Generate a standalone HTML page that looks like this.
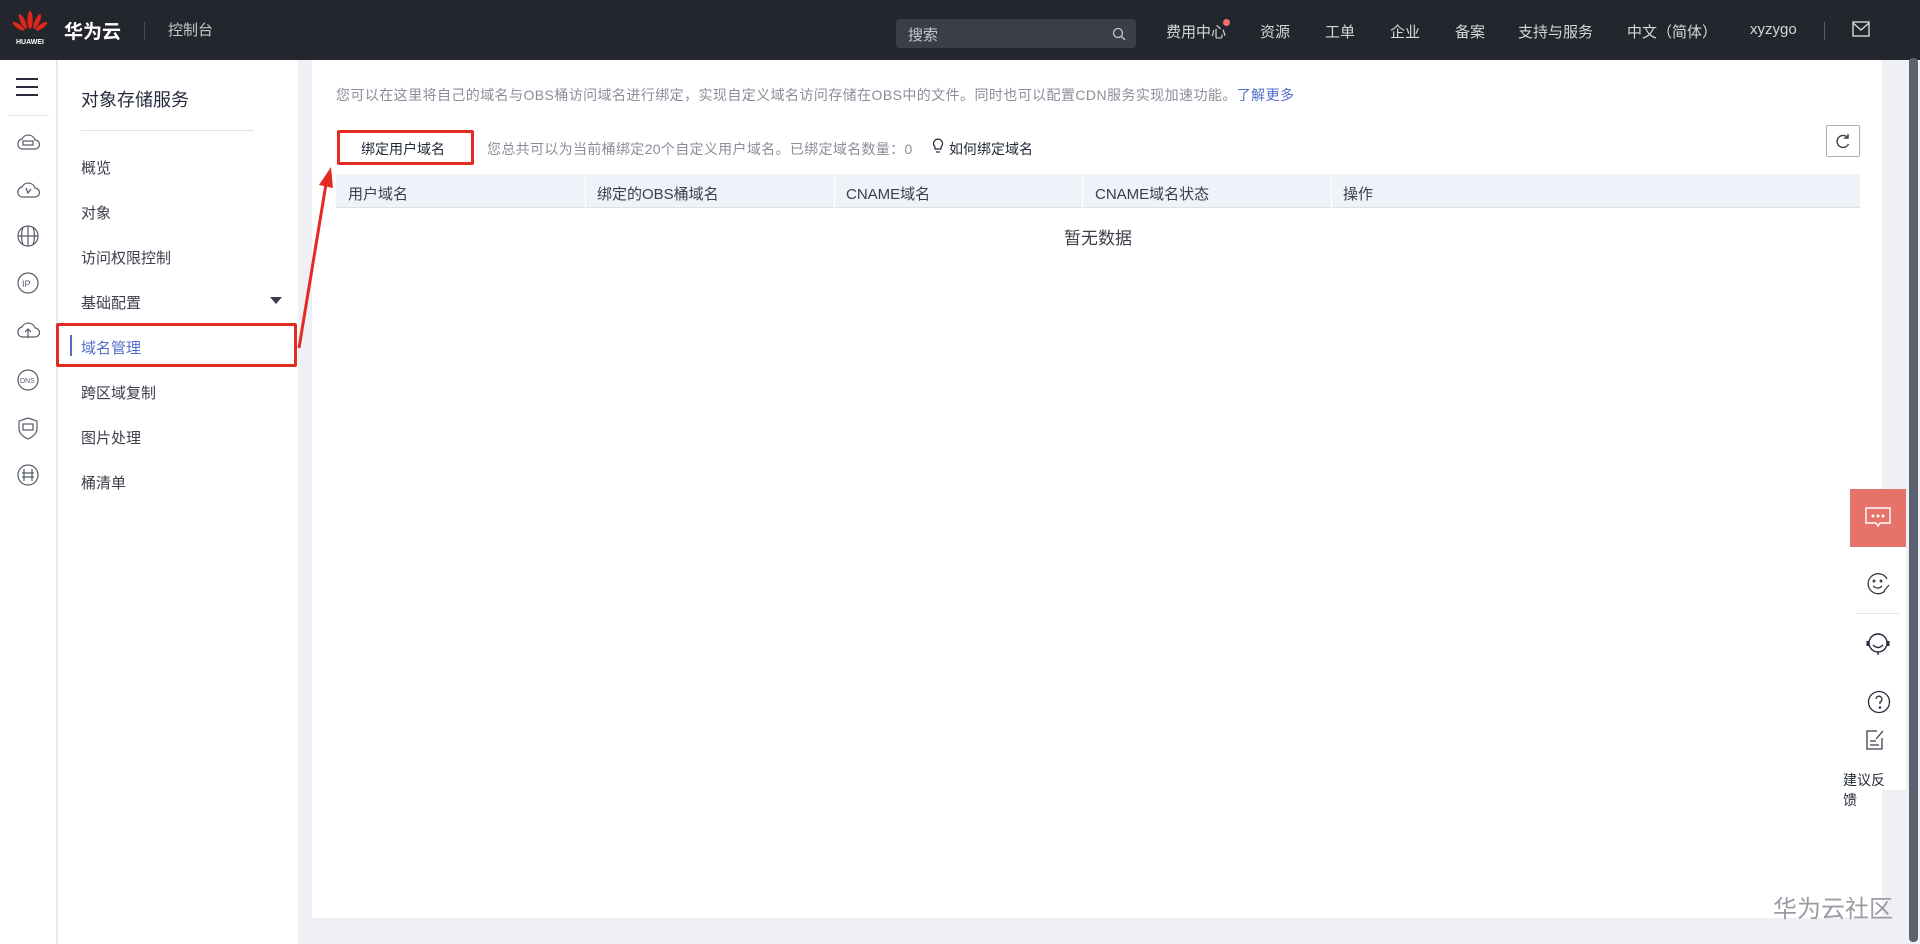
<!DOCTYPE html>
<html><head><meta charset="utf-8">
<style>
*{margin:0;padding:0;box-sizing:border-box}
body{width:1920px;height:944px;overflow:hidden;background:#eef0f5;font-family:"Liberation Sans","Noto Sans CJK SC",sans-serif;position:relative;color:#252b3a}
.abs{position:absolute}
.hdr{left:0;top:0;width:1920px;height:60px;background:#24262d}
.nav{color:#d5d7dc;font-size:15px;top:21px;white-space:nowrap}
.rail{left:0;top:60px;width:57px;height:884px;background:#fff;border-right:1px solid #e5e6ea}
.side{left:58px;top:60px;width:240px;height:884px;background:#fff}
.mi{left:81px;font-size:15px;color:#3b3f4a}
.card{left:312px;top:60px;width:1570px;height:858px;background:#fff}
.th{font-size:15px;color:#3b3f4a;top:183px}
</style></head><body>
<div class="abs hdr"></div>
<svg class="abs" style="left:12px;top:10px" width="36" height="36" viewBox="0 0 36 36">
<g fill="#e0261c"><ellipse cx="18" cy="10" rx="2.6" ry="9"/><ellipse cx="13" cy="11" rx="2.4" ry="8" transform="rotate(-25 13 16)"/><ellipse cx="23" cy="11" rx="2.4" ry="8" transform="rotate(25 23 16)"/><ellipse cx="9" cy="15" rx="2.2" ry="7" transform="rotate(-55 9 18)"/><ellipse cx="27" cy="15" rx="2.2" ry="7" transform="rotate(55 27 18)"/></g>
<text x="18" y="34" font-size="7" fill="#fff" text-anchor="middle" font-family="Liberation Sans" font-weight="bold">HUAWEI</text></svg>
<div class="abs" style="left:64px;top:17px;color:#fff;font-size:19px;font-weight:bold">华为云</div>
<div class="abs" style="left:144px;top:22px;width:1px;height:18px;background:#4a4d57"></div>
<div class="abs" style="left:168px;top:19px;color:#c6c8ce;font-size:15px">控制台</div>
<div class="abs" style="left:896px;top:19px;width:240px;height:29px;background:#3b3e48;border-radius:3px"></div>
<div class="abs" style="left:908px;top:24px;color:#c6c8ce;font-size:15px">搜索</div>
<svg class="abs" style="left:1112px;top:27px" width="14" height="14" viewBox="0 0 14 14"><circle cx="6" cy="6" r="4.5" fill="none" stroke="#c6c8ce" stroke-width="1.3"/><path d="M9.5 9.5L13 13" stroke="#c6c8ce" stroke-width="1.3"/></svg>
<div class="abs nav" style="left:1166px">费用中心</div>
<div class="abs" style="left:1223px;top:19px;width:7px;height:7px;border-radius:50%;background:#f66f6a"></div>
<div class="abs nav" style="left:1260px">资源</div>
<div class="abs nav" style="left:1325px">工单</div>
<div class="abs nav" style="left:1390px">企业</div>
<div class="abs nav" style="left:1455px">备案</div>
<div class="abs nav" style="left:1518px">支持与服务</div>
<div class="abs nav" style="left:1627px">中文（简体）</div>
<div class="abs nav" style="left:1750px">xyzygo</div>
<div class="abs" style="left:1824px;top:22px;width:1px;height:18px;background:#5a5d66"></div>
<svg class="abs" style="left:1852px;top:21px" width="18" height="16" viewBox="0 0 18 16"><rect x="1" y="1" width="16" height="14" fill="none" stroke="#d5d7dc" stroke-width="1.4"/><path d="M1 2l8 7 8-7" fill="none" stroke="#d5d7dc" stroke-width="1.4"/></svg>

<div class="abs rail"></div>
<svg class="abs" style="left:16px;top:78px" width="22" height="18"><rect y="0" width="22" height="2" fill="#252b3a"/><rect y="8" width="22" height="2" fill="#252b3a"/><rect y="16" width="22" height="2" fill="#252b3a"/></svg>
<div class="abs" style="left:8px;top:115px;width:41px;height:1px;background:#e1e3e8"></div>
<svg class="abs" style="left:14px;top:128px" width="28" height="360" viewBox="0 0 28 360" fill="none" stroke="#555a66" stroke-width="1.2">
<path d="M4 17a5 5 0 0 1 4-6a7 7 0 0 1 13 1a4.5 4.5 0 0 1 0 9H8a4.5 4.5 0 0 1-4-4z"/><rect x="9" y="13" width="10" height="4"/>
<path d="M4 65a5 5 0 0 1 4-6a7 7 0 0 1 13 1a4.5 4.5 0 0 1 0 9H8a4.5 4.5 0 0 1-4-4z"/><path d="M12 60l2 5 3-4"/>
<circle cx="14" cy="108" r="10"/><path d="M4 108h20M14 98v20M9 99q-3 9 0 18M19 99q3 9 0 18"/>
<circle cx="14" cy="155" r="10"/><text x="8" y="159" font-size="9" fill="#555a66" stroke="none">IP</text>
<path d="M4 205a5 5 0 0 1 4-6a7 7 0 0 1 13 1a4.5 4.5 0 0 1 0 9H8a4.5 4.5 0 0 1-4-4z"/><path d="M14 210v-9M11 204l3-3 3 3"/>
<circle cx="14" cy="252" r="10"/><text x="6" y="255" font-size="7" fill="#555a66" stroke="none">DNS</text>
<path d="M14 290l9 3v7q0 7-9 11q-9-4-9-11v-7z"/><rect x="9" y="296" width="10" height="6"/>
<circle cx="14" cy="347" r="10"/><path d="M10 341v12M18 341v12M8 345h12M8 349h12"/>
</svg>

<div class="abs side"></div>
<div class="abs" style="left:81px;top:86px;font-size:18px;color:#252b3a">对象存储服务</div>
<div class="abs" style="left:81px;top:130px;width:173px;height:1px;background:#dfe1e6"></div>
<div class="abs mi" style="top:157px">概览</div>
<div class="abs mi" style="top:202px">对象</div>
<div class="abs mi" style="top:247px">访问权限控制</div>
<div class="abs mi" style="top:292px">基础配置</div>
<svg class="abs" style="left:270px;top:297px" width="12" height="8"><path d="M0 0h12L6 7z" fill="#3b3f4a"/></svg>
<div class="abs" style="left:56px;top:323px;width:241px;height:44px;border:3px solid #e42b23;border-radius:2px"></div>
<div class="abs" style="left:70px;top:335px;width:2px;height:21px;background:#526ecc"></div>
<div class="abs mi" style="top:337px;color:#526ecc">域名管理</div>
<div class="abs mi" style="top:382px">跨区域复制</div>
<div class="abs mi" style="top:427px">图片处理</div>
<div class="abs mi" style="top:472px">桶清单</div>

<div class="abs card"></div>
<div class="abs" style="left:336px;top:85px;font-size:14px;color:#8a8e99;white-space:nowrap;letter-spacing:0.42px">您可以在这里将自己的域名与OBS桶访问域名进行绑定，实现自定义域名访问存储在OBS中的文件。同时也可以配置CDN服务实现加速功能。<span style="color:#526ecc">了解更多</span></div>
<div class="abs" style="left:337px;top:130px;width:137px;height:35px;border:3px solid #e42b23;border-radius:2px;background:#fff"></div>
<div class="abs" style="left:361px;top:139px;font-size:14px;color:#252b3a">绑定用户域名</div>
<div class="abs" style="left:487px;top:139px;font-size:14px;color:#8a8e99;white-space:nowrap;letter-spacing:0.33px">您总共可以为当前桶绑定20个自定义用户域名。已绑定域名数量：0</div>
<svg class="abs" style="left:932px;top:137px" width="12" height="17" viewBox="0 0 12 17" fill="none" stroke="#252b3a" stroke-width="1.2"><path d="M3 10a4.5 4.5 0 1 1 6 0v2H3z"/><path d="M4 15h4"/></svg>
<div class="abs" style="left:949px;top:139px;font-size:14px;color:#252b3a">如何绑定域名</div>
<div class="abs" style="left:1826px;top:125px;width:34px;height:32px;border:1px solid #adb0b8;border-radius:2px;background:#fff"></div>
<svg class="abs" style="left:1834px;top:132px" width="18" height="18" viewBox="0 0 18 18" fill="none" stroke="#3b3f4a" stroke-width="1.4"><path d="M14 6A6 6 0 1 0 14.5 12"/><path d="M14 2v4h-4"/></svg>
<div class="abs" style="left:336px;top:174px;width:1524px;height:34px;background:#eff2f8;border-bottom:1px solid #dfe1e6"></div>
<div class="abs" style="left:585px;top:174px;width:1px;height:34px;background:#fff"></div>
<div class="abs" style="left:834px;top:174px;width:1px;height:34px;background:#fff"></div>
<div class="abs" style="left:1082px;top:174px;width:1px;height:34px;background:#fff"></div>
<div class="abs" style="left:1331px;top:174px;width:1px;height:34px;background:#fff"></div>
<div class="abs th" style="left:348px">用户域名</div>
<div class="abs th" style="left:597px">绑定的OBS桶域名</div>
<div class="abs th" style="left:846px">CNAME域名</div>
<div class="abs th" style="left:1095px">CNAME域名状态</div>
<div class="abs th" style="left:1343px">操作</div>
<div class="abs" style="left:1064px;top:224px;font-size:17px;color:#3b3f4a">暂无数据</div>

<svg class="abs" style="left:0;top:0" width="400" height="400"><path d="M299 348L326 184" stroke="#e42b23" stroke-width="3"/><path d="M331 167L319 185L333 188z" fill="#e42b23"/></svg>

<div class="abs" style="left:1850px;top:489px;width:56px;height:58px;background:#e5736a"></div>
<svg class="abs" style="left:1864px;top:506px" width="28" height="24" viewBox="0 0 28 24" fill="none" stroke="#fff" stroke-width="1.4"><path d="M2 2h24v15H16l-2 3-2-3H2z"/><circle cx="9" cy="10" r=".8" fill="#fff"/><circle cx="14" cy="10" r=".8" fill="#fff"/><circle cx="19" cy="10" r=".8" fill="#fff"/></svg>
<div class="abs" style="left:1856px;top:547px;width:50px;height:243px;background:#fff"></div>
<svg class="abs" style="left:1865px;top:570px" width="26" height="26" viewBox="0 0 26 26" fill="none" stroke="#3b3f4a" stroke-width="1.3"><path d="M22 9A10 10 0 1 0 20 21"/><circle cx="9" cy="11" r=".8"/><circle cx="16" cy="11" r=".8"/><path d="M8 16q5 4 9 0M19 21l5-6"/></svg>
<div class="abs" style="left:1857px;top:613px;width:42px;height:1px;background:#e1e3e8"></div>
<svg class="abs" style="left:1864px;top:630px" width="28" height="28" viewBox="0 0 28 28" fill="none" stroke="#252b3a" stroke-width="1.4"><circle cx="14" cy="13" r="9"/><path d="M9 15q5 5 10 0"/><path d="M4 11v5M24 11v5" stroke-width="3"/><path d="M14 22v3"/></svg>
<svg class="abs" style="left:1867px;top:690px" width="24" height="24" viewBox="0 0 24 24" fill="none" stroke="#252b3a" stroke-width="1.3"><circle cx="12" cy="12" r="10.5"/><path d="M9 9a3 3 0 1 1 4 3v2"/><circle cx="13" cy="17.5" r=".6"/></svg>
<svg class="abs" style="left:1864px;top:728px" width="22" height="24" viewBox="0 0 22 24" fill="none" stroke="#3b3f4a" stroke-width="1.3"><path d="M13 3H3v18h15V10"/><path d="M6 13h6M6 17h9M12 11l7-8"/></svg>
<div class="abs" style="left:1843px;top:770px;font-size:14px;color:#252b3a;line-height:20px;width:60px">建议反<br>馈</div>

<div class="abs" style="left:1773px;top:889px;font-size:24px;color:#9a9ca3">华为云社区</div>
<div class="abs" style="left:1906px;top:60px;width:14px;height:884px;background:#eef0f5"></div>
<div class="abs" style="left:1909px;top:58px;width:9px;height:884px;background:#5c6170;border-radius:4px"></div>
</body></html>
